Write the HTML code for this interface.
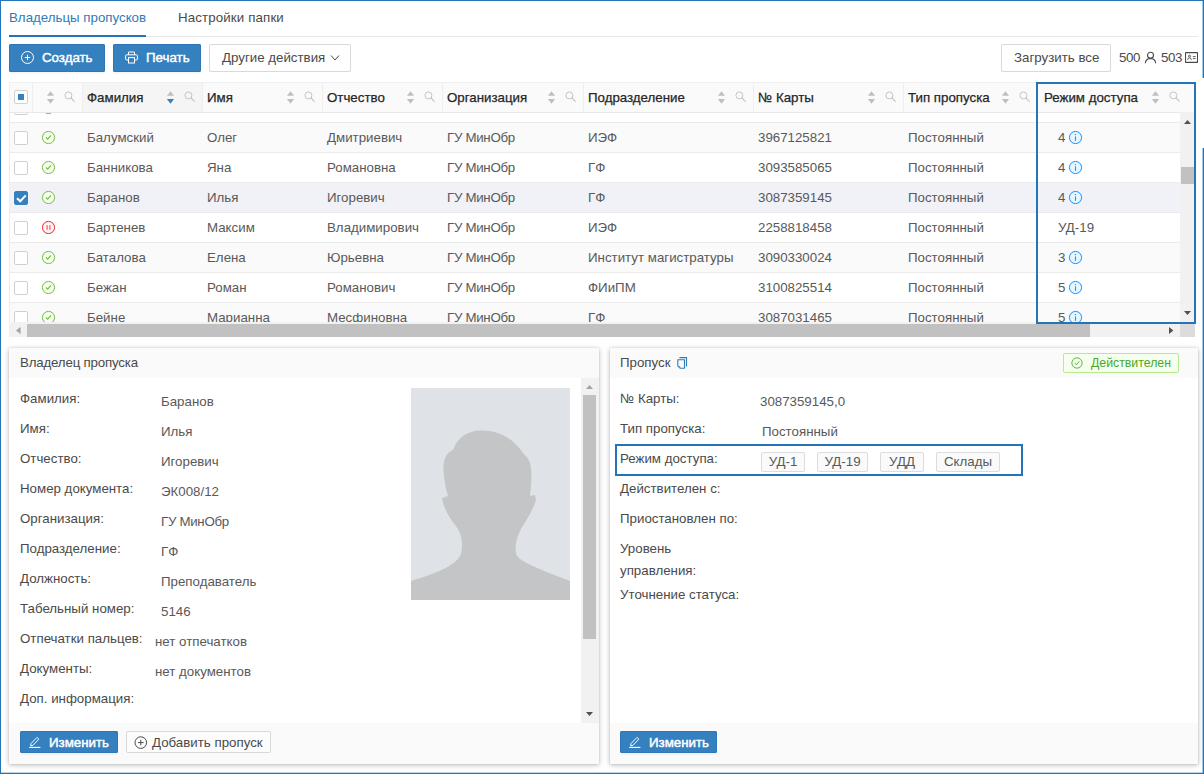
<!DOCTYPE html>
<html lang="ru">
<head>
<meta charset="utf-8">
<title>Владельцы пропусков</title>
<style>
*{box-sizing:border-box;margin:0;padding:0}
html,body{width:1204px;height:774px;overflow:hidden;background:#fff}
body{font-family:"Liberation Sans",sans-serif;font-size:13.3px;color:#595959;position:relative}
.abs{position:absolute}
.frame-t{left:0;top:0;width:1204px;height:1px;background:#2474ba}
.frame-b{left:0;top:772px;width:1204px;height:2px;background:linear-gradient(180deg,rgba(36,116,186,.3) 50%,#2474ba 50%)}
.frame-l{left:0;top:0;width:1px;height:774px;background:#2474ba}
.frame-r1{left:1202px;top:0;width:2px;height:78px;background:linear-gradient(90deg,rgba(36,116,186,.4) 50%,#2474ba 50%)}
.frame-r2{left:1202px;top:148px;width:2px;height:626px;background:linear-gradient(90deg,rgba(36,116,186,.4) 50%,#2474ba 50%)}
.tabs{left:9px;top:0;width:1189px;height:37px;border-bottom:1px solid #e8e8e8}
.tab{position:absolute;top:0;height:37px;line-height:35px;white-space:nowrap;font-size:13.3px}
.tab.act{color:#337ab7;border-bottom:2px solid #2474ba;left:0;width:137px}
.tab.two{left:169px;color:#4a4a4a}
.btn{position:absolute;height:28px;line-height:28px;border-radius:2px;white-space:nowrap;font-size:13.3px}
.btn.pri{background:#3580be;color:#fff;border-radius:2px;box-shadow:inset 0 0 0 1px #2e76b6, 0 2px 0 rgba(0,0,0,0.035)}
.btn.def{background:#fff;border:1px solid #d9d9d9;color:#4a4a4a;line-height:26px}
svg{display:block}

.med{font-weight:normal;-webkit-text-stroke:0.45px currentColor}
.tbl{left:9px;top:82px;width:1186px;height:255px;overflow:hidden}
.thead{left:0;top:0;width:1186px;height:31px;background:#fafafa;border-bottom:1px solid #e8e8e8;border-top:1px solid #f0f0f0}
.th{position:absolute;top:0;height:29px;border-left:1px solid #efefef;line-height:30px;color:#262626}
.th.sorted{background:#f5f5f5}
.th .tt{position:absolute;left:4px;top:0;white-space:nowrap;font-weight:normal;-webkit-text-stroke:0.25px currentColor}
.th .sort{position:absolute;top:8px}
.th .srch{position:absolute;top:8px}
.tbody{left:0;top:31px;width:1171px;height:209px;overflow:hidden;background:#fff;border-left:1px solid #ececec}
.tr{position:absolute;left:-1px;width:1171px;height:30px;border-top:1px solid #ebebeb;line-height:29px;background:#fff}
.tr.odd{background:#fafafa}
.tr.sel{background:#f0f2f7}
.td{position:absolute;top:0;white-space:nowrap}
.cb{position:absolute;left:5px;top:8px;width:14px;height:14px;border:1px solid #d0d0d0;border-radius:2px;background:#fff}
.cb.on{background:#3580be;border-color:#3580be}
.cb.on svg{margin:-1px}
.cb.ind{top:7px;left:4px}
.cb.ind i{position:absolute;left:3px;top:3px;width:6px;height:6px;background:#3580be}
.st{position:absolute;left:32px;top:7px}
.inf{position:absolute;left:1059px;top:7px}
.vsb{left:1171px;top:30px;width:15px;height:210px;background:#f1f1f1}
.hsb{left:0;top:240px;width:1186px;height:15px;background:#f1f1f1}
.thumb{background:#c1c1c1}
.hl{border:2px solid #2474ba}

.panel{background:#fff;box-shadow:0 1px 5px rgba(0,0,0,0.28), 0 0 1px rgba(0,0,0,0.15)}
.phead{left:0;top:0;width:100%;height:30px;background:#fafafa;line-height:30px;color:#4a4a4a}
.pbody{left:0;top:30px;width:100%;height:345px;background:#fff;overflow:hidden}
.pfoot{left:0;top:375px;width:100%;height:41px;background:#fafafa}
.lab,.val{position:absolute;white-space:nowrap;line-height:30px;color:#4a4a4a}
.val{color:#595959}
.sbtn{position:absolute;top:8px;height:22px;line-height:23px;border-radius:2px;white-space:nowrap}
.sbtn.pri{background:#3580be;color:#fff;box-shadow:inset 0 0 0 1px #2e76b6, 0 2px 0 rgba(0,0,0,0.035)}
.sbtn.def{background:#fcfcfc;border:1px solid #d9d9d9;color:#4a4a4a;line-height:21px}
.gtag{border:1px solid #b7eb8f;background:#f6ffed;border-radius:2px;color:#4aa82a;line-height:18px;font-size:12.3px}
.tag{position:absolute;height:20px;line-height:18px;border:1px solid #dcdcdc;background:#fafafa;border-radius:2px;text-align:center;color:#595959}
</style>
</head>
<body>
<div class="abs tabs">
  <div class="tab act">Владельцы пропусков</div>
  <div class="tab two" style="letter-spacing:0.13px">Настройки папки</div>
</div>

<!-- toolbar -->
<div class="btn pri" style="left:9px;top:44px;width:96px"><svg class="abs" style="left:11px;top:6px" width="15" height="15" viewBox="0 0 15 15"><circle cx="7.5" cy="7.5" r="6" fill="none" stroke="#fff" stroke-width="1"/><path d="M7.5 4.8 V10.2 M4.8 7.5 H10.2" stroke="#fff" stroke-width="1"/></svg><span class="abs med" style="left:33px;top:0">Создать</span></div>
<div class="btn pri" style="left:113px;top:44px;width:88px"><svg class="abs" style="left:12px;top:7px" width="13" height="13" viewBox="0 0 13 13"><path d="M3.5 3.8 V1 H9.5 V3.8" fill="none" stroke="#fff" stroke-width="1"/><path d="M3.3 9 H1.6 Q0.6 9 0.6 8 V4.8 Q0.6 3.8 1.6 3.8 H11.4 Q12.4 3.8 12.4 4.8 V8 Q12.4 9 11.4 9 H9.7" fill="none" stroke="#fff" stroke-width="1"/><rect x="3.5" y="6.6" width="6" height="5.4" fill="none" stroke="#fff" stroke-width="1"/></svg><span class="abs med" style="left:33px;top:0">Печать</span></div>
<div class="btn def" style="left:209px;top:44px;width:142px"><span class="abs" style="left:12px;top:0">Другие действия</span><svg class="abs" style="left:120px;top:9px" width="10" height="8" viewBox="0 0 10 8"><path d="M1 1.5 L5 6 L9 1.5" fill="none" stroke="#4a4a4a" stroke-width="1"/></svg></div>
<div class="btn def" style="left:1001px;top:44px;width:110px"><span class="abs" style="left:12px;top:0">Загрузить все</span></div>
<div class="abs" style="left:1119px;top:44px;line-height:28px;color:#4a4a4a;letter-spacing:-0.4px">500</div>
<svg class="abs" style="left:1144px;top:51px" width="13" height="13" viewBox="0 0 13 13"><circle cx="6.5" cy="4.3" r="3" fill="none" stroke="#4a4a4a" stroke-width="1.1"/><path d="M1.3 12.2 Q1.8 7.6 6.5 7.4 Q11.2 7.6 11.7 12.2" fill="none" stroke="#4a4a4a" stroke-width="1.1"/></svg>
<div class="abs" style="left:1161px;top:44px;line-height:28px;color:#4a4a4a;letter-spacing:-0.4px">503</div>
<svg class="abs" style="left:1185px;top:52px" width="13" height="11" viewBox="0 0 13 11"><rect x="0.5" y="0.6" width="12" height="9.8" rx="0.4" fill="none" stroke="#4a4a4a" stroke-width="1.1"/><path d="M2.6 7.9 Q2.8 5.8 4.5 5.8 Q6.2 5.8 6.4 7.9 M7.8 4.6 H10.6 M7.8 6.6 H10.6" fill="none" stroke="#4a4a4a" stroke-width="0.9"/><circle cx="4.5" cy="4.2" r="1" fill="none" stroke="#4a4a4a" stroke-width="0.9"/></svg>


<div class="abs tbl">
<div class="abs tbody">
<div class="tr" style="top:-21px">
<span class="cb"></span>
<svg class="st" width="15" height="15" viewBox="0 0 15 15"><circle cx="7.5" cy="7.5" r="6.1" fill="#f6ffed" stroke="#6fc03c" stroke-width="1"/><path d="M5 7.5 L6.7 9.2 L10 5.3" fill="none" stroke="#6fc03c" stroke-width="1.1"/></svg>
<span class="td" style="left:78px">Балашов</span>
<span class="td" style="left:198px">Анна</span>
<span class="td" style="left:318px">Алексеевна</span>
<span class="td" style="left:438px"></span>
<span class="td" style="left:579px">ИЭФ</span>
<span class="td" style="left:749px">3087031222</span>
<span class="td" style="left:899px">Постоянный</span>
</div>
<div class="tr odd" style="top:9px">
<span class="cb"></span>
<svg class="st" width="15" height="15" viewBox="0 0 15 15"><circle cx="7.5" cy="7.5" r="6.1" fill="#f6ffed" stroke="#6fc03c" stroke-width="1"/><path d="M5 7.5 L6.7 9.2 L10 5.3" fill="none" stroke="#6fc03c" stroke-width="1.1"/></svg>
<span class="td" style="left:78px">Балумский</span>
<span class="td" style="left:198px">Олег</span>
<span class="td" style="left:318px">Дмитриевич</span>
<span class="td" style="left:438px;letter-spacing:-0.3px">ГУ МинОбр</span>
<span class="td" style="left:579px">ИЭФ</span>
<span class="td" style="left:749px">3967125821</span>
<span class="td" style="left:899px">Постоянный</span>
<span class="td" style="left:1049px">4</span><svg class="inf" width="15" height="15" viewBox="0 0 15 15"><circle cx="7.5" cy="7.5" r="6.1" fill="#e6f7ff" stroke="#1890ff" stroke-width="1"/><path d="M7.5 6.4 V10.8" stroke="#1890ff" stroke-width="1.1"/><circle cx="7.5" cy="4.6" r="0.7" fill="#1890ff"/></svg>
</div>
<div class="tr" style="top:39px">
<span class="cb"></span>
<svg class="st" width="15" height="15" viewBox="0 0 15 15"><circle cx="7.5" cy="7.5" r="6.1" fill="#f6ffed" stroke="#6fc03c" stroke-width="1"/><path d="M5 7.5 L6.7 9.2 L10 5.3" fill="none" stroke="#6fc03c" stroke-width="1.1"/></svg>
<span class="td" style="left:78px">Банникова</span>
<span class="td" style="left:198px">Яна</span>
<span class="td" style="left:318px">Романовна</span>
<span class="td" style="left:438px;letter-spacing:-0.3px">ГУ МинОбр</span>
<span class="td" style="left:579px">ГФ</span>
<span class="td" style="left:749px">3093585065</span>
<span class="td" style="left:899px">Постоянный</span>
<span class="td" style="left:1049px">4</span><svg class="inf" width="15" height="15" viewBox="0 0 15 15"><circle cx="7.5" cy="7.5" r="6.1" fill="#e6f7ff" stroke="#1890ff" stroke-width="1"/><path d="M7.5 6.4 V10.8" stroke="#1890ff" stroke-width="1.1"/><circle cx="7.5" cy="4.6" r="0.7" fill="#1890ff"/></svg>
</div>
<div class="tr sel" style="top:69px">
<span class="cb on"><svg width="14" height="14" viewBox="0 0 14 14"><path d="M3 7.2 L6.3 10.3 L11.7 4.4" fill="none" stroke="#fff" stroke-width="2"/></svg></span>
<svg class="st" width="15" height="15" viewBox="0 0 15 15"><circle cx="7.5" cy="7.5" r="6.1" fill="#f6ffed" stroke="#6fc03c" stroke-width="1"/><path d="M5 7.5 L6.7 9.2 L10 5.3" fill="none" stroke="#6fc03c" stroke-width="1.1"/></svg>
<span class="td" style="left:78px">Баранов</span>
<span class="td" style="left:198px">Илья</span>
<span class="td" style="left:318px">Игоревич</span>
<span class="td" style="left:438px;letter-spacing:-0.3px">ГУ МинОбр</span>
<span class="td" style="left:579px">ГФ</span>
<span class="td" style="left:749px">3087359145</span>
<span class="td" style="left:899px">Постоянный</span>
<span class="td" style="left:1049px">4</span><svg class="inf" width="15" height="15" viewBox="0 0 15 15"><circle cx="7.5" cy="7.5" r="6.1" fill="#e6f7ff" stroke="#1890ff" stroke-width="1"/><path d="M7.5 6.4 V10.8" stroke="#1890ff" stroke-width="1.1"/><circle cx="7.5" cy="4.6" r="0.7" fill="#1890ff"/></svg>
</div>
<div class="tr" style="top:99px">
<span class="cb"></span>
<svg class="st" width="15" height="15" viewBox="0 0 15 15"><circle cx="7.5" cy="7.5" r="6.1" fill="#fff1f0" stroke="#f5222d" stroke-width="1"/><path d="M6.1 5.3 V9.7 M8.9 5.3 V9.7" fill="none" stroke="#f5222d" stroke-opacity="0.8" stroke-width="1.1"/></svg>
<span class="td" style="left:78px">Бартенев</span>
<span class="td" style="left:198px">Максим</span>
<span class="td" style="left:318px">Владимирович</span>
<span class="td" style="left:438px;letter-spacing:-0.3px">ГУ МинОбр</span>
<span class="td" style="left:579px">ИЭФ</span>
<span class="td" style="left:749px">2258818458</span>
<span class="td" style="left:899px">Постоянный</span>
<span class="td" style="left:1049px">УД-19</span>
</div>
<div class="tr odd" style="top:129px">
<span class="cb"></span>
<svg class="st" width="15" height="15" viewBox="0 0 15 15"><circle cx="7.5" cy="7.5" r="6.1" fill="#f6ffed" stroke="#6fc03c" stroke-width="1"/><path d="M5 7.5 L6.7 9.2 L10 5.3" fill="none" stroke="#6fc03c" stroke-width="1.1"/></svg>
<span class="td" style="left:78px">Баталова</span>
<span class="td" style="left:198px">Елена</span>
<span class="td" style="left:318px">Юрьевна</span>
<span class="td" style="left:438px;letter-spacing:-0.3px">ГУ МинОбр</span>
<span class="td" style="left:579px">Институт магистратуры</span>
<span class="td" style="left:749px">3090330024</span>
<span class="td" style="left:899px">Постоянный</span>
<span class="td" style="left:1049px">3</span><svg class="inf" width="15" height="15" viewBox="0 0 15 15"><circle cx="7.5" cy="7.5" r="6.1" fill="#e6f7ff" stroke="#1890ff" stroke-width="1"/><path d="M7.5 6.4 V10.8" stroke="#1890ff" stroke-width="1.1"/><circle cx="7.5" cy="4.6" r="0.7" fill="#1890ff"/></svg>
</div>
<div class="tr" style="top:159px">
<span class="cb"></span>
<svg class="st" width="15" height="15" viewBox="0 0 15 15"><circle cx="7.5" cy="7.5" r="6.1" fill="#f6ffed" stroke="#6fc03c" stroke-width="1"/><path d="M5 7.5 L6.7 9.2 L10 5.3" fill="none" stroke="#6fc03c" stroke-width="1.1"/></svg>
<span class="td" style="left:78px">Бежан</span>
<span class="td" style="left:198px">Роман</span>
<span class="td" style="left:318px">Романович</span>
<span class="td" style="left:438px;letter-spacing:-0.3px">ГУ МинОбр</span>
<span class="td" style="left:579px">ФИиПМ</span>
<span class="td" style="left:749px">3100825514</span>
<span class="td" style="left:899px">Постоянный</span>
<span class="td" style="left:1049px">5</span><svg class="inf" width="15" height="15" viewBox="0 0 15 15"><circle cx="7.5" cy="7.5" r="6.1" fill="#e6f7ff" stroke="#1890ff" stroke-width="1"/><path d="M7.5 6.4 V10.8" stroke="#1890ff" stroke-width="1.1"/><circle cx="7.5" cy="4.6" r="0.7" fill="#1890ff"/></svg>
</div>
<div class="tr odd" style="top:189px">
<span class="cb"></span>
<svg class="st" width="15" height="15" viewBox="0 0 15 15"><circle cx="7.5" cy="7.5" r="6.1" fill="#f6ffed" stroke="#6fc03c" stroke-width="1"/><path d="M5 7.5 L6.7 9.2 L10 5.3" fill="none" stroke="#6fc03c" stroke-width="1.1"/></svg>
<span class="td" style="left:78px">Бейне</span>
<span class="td" style="left:198px">Марианна</span>
<span class="td" style="left:318px">Месфиновна</span>
<span class="td" style="left:438px;letter-spacing:-0.3px">ГУ МинОбр</span>
<span class="td" style="left:579px">ГФ</span>
<span class="td" style="left:749px">3087031465</span>
<span class="td" style="left:899px">Постоянный</span>
<span class="td" style="left:1049px">5</span><svg class="inf" width="15" height="15" viewBox="0 0 15 15"><circle cx="7.5" cy="7.5" r="6.1" fill="#e6f7ff" stroke="#1890ff" stroke-width="1"/><path d="M7.5 6.4 V10.8" stroke="#1890ff" stroke-width="1.1"/><circle cx="7.5" cy="4.6" r="0.7" fill="#1890ff"/></svg>
</div>
</div>
<div class="abs thead">
<div class="th" style="left:0px;width:23px">
<span class="cb ind"><i></i></span>
</div>
<div class="th" style="left:23px;width:50px">
<svg class="sort" style="left:13px" width="9" height="14" viewBox="0 0 9 14"><path d="M4.5 0.2 L8.1 4.8 L0.9 4.8 Z" fill="#bfbfbf"/><path d="M4.5 12.7 L8.1 8 L0.9 8 Z" fill="#bfbfbf"/></svg>
<svg class="srch" style="left:31px" width="11" height="11" viewBox="0 0 12 12"><circle cx="4.8" cy="4.8" r="3.8" fill="none" stroke="#bfbfbf" stroke-width="1"/><path d="M7.6 7.6 L11.5 11.5" stroke="#bfbfbf" stroke-width="1.1"/></svg>
</div>
<div class="th sorted" style="left:73px;width:120px">
<span class="tt">Фамилия</span>
<svg class="sort" style="left:83px" width="9" height="14" viewBox="0 0 9 14"><path d="M4.5 0.2 L8.1 4.8 L0.9 4.8 Z" fill="#bfbfbf"/><path d="M4.5 12.7 L8.1 8 L0.9 8 Z" fill="#3580be"/></svg>
<svg class="srch" style="left:101px" width="11" height="11" viewBox="0 0 12 12"><circle cx="4.8" cy="4.8" r="3.8" fill="none" stroke="#bfbfbf" stroke-width="1"/><path d="M7.6 7.6 L11.5 11.5" stroke="#bfbfbf" stroke-width="1.1"/></svg>
</div>
<div class="th" style="left:193px;width:120px">
<span class="tt">Имя</span>
<svg class="sort" style="left:83px" width="9" height="14" viewBox="0 0 9 14"><path d="M4.5 0.2 L8.1 4.8 L0.9 4.8 Z" fill="#bfbfbf"/><path d="M4.5 12.7 L8.1 8 L0.9 8 Z" fill="#bfbfbf"/></svg>
<svg class="srch" style="left:101px" width="11" height="11" viewBox="0 0 12 12"><circle cx="4.8" cy="4.8" r="3.8" fill="none" stroke="#bfbfbf" stroke-width="1"/><path d="M7.6 7.6 L11.5 11.5" stroke="#bfbfbf" stroke-width="1.1"/></svg>
</div>
<div class="th" style="left:313px;width:120px">
<span class="tt">Отчество</span>
<svg class="sort" style="left:83px" width="9" height="14" viewBox="0 0 9 14"><path d="M4.5 0.2 L8.1 4.8 L0.9 4.8 Z" fill="#bfbfbf"/><path d="M4.5 12.7 L8.1 8 L0.9 8 Z" fill="#bfbfbf"/></svg>
<svg class="srch" style="left:101px" width="11" height="11" viewBox="0 0 12 12"><circle cx="4.8" cy="4.8" r="3.8" fill="none" stroke="#bfbfbf" stroke-width="1"/><path d="M7.6 7.6 L11.5 11.5" stroke="#bfbfbf" stroke-width="1.1"/></svg>
</div>
<div class="th" style="left:433px;width:141px">
<span class="tt">Организация</span>
<svg class="sort" style="left:104px" width="9" height="14" viewBox="0 0 9 14"><path d="M4.5 0.2 L8.1 4.8 L0.9 4.8 Z" fill="#bfbfbf"/><path d="M4.5 12.7 L8.1 8 L0.9 8 Z" fill="#bfbfbf"/></svg>
<svg class="srch" style="left:122px" width="11" height="11" viewBox="0 0 12 12"><circle cx="4.8" cy="4.8" r="3.8" fill="none" stroke="#bfbfbf" stroke-width="1"/><path d="M7.6 7.6 L11.5 11.5" stroke="#bfbfbf" stroke-width="1.1"/></svg>
</div>
<div class="th" style="left:574px;width:170px">
<span class="tt">Подразделение</span>
<svg class="sort" style="left:133px" width="9" height="14" viewBox="0 0 9 14"><path d="M4.5 0.2 L8.1 4.8 L0.9 4.8 Z" fill="#bfbfbf"/><path d="M4.5 12.7 L8.1 8 L0.9 8 Z" fill="#bfbfbf"/></svg>
<svg class="srch" style="left:151px" width="11" height="11" viewBox="0 0 12 12"><circle cx="4.8" cy="4.8" r="3.8" fill="none" stroke="#bfbfbf" stroke-width="1"/><path d="M7.6 7.6 L11.5 11.5" stroke="#bfbfbf" stroke-width="1.1"/></svg>
</div>
<div class="th" style="left:744px;width:150px">
<span class="tt">№ Карты</span>
<svg class="sort" style="left:113px" width="9" height="14" viewBox="0 0 9 14"><path d="M4.5 0.2 L8.1 4.8 L0.9 4.8 Z" fill="#bfbfbf"/><path d="M4.5 12.7 L8.1 8 L0.9 8 Z" fill="#bfbfbf"/></svg>
<svg class="srch" style="left:131px" width="11" height="11" viewBox="0 0 12 12"><circle cx="4.8" cy="4.8" r="3.8" fill="none" stroke="#bfbfbf" stroke-width="1"/><path d="M7.6 7.6 L11.5 11.5" stroke="#bfbfbf" stroke-width="1.1"/></svg>
</div>
<div class="th" style="left:894px;width:134px">
<span class="tt">Тип пропуска</span>
<svg class="sort" style="left:97px" width="9" height="14" viewBox="0 0 9 14"><path d="M4.5 0.2 L8.1 4.8 L0.9 4.8 Z" fill="#bfbfbf"/><path d="M4.5 12.7 L8.1 8 L0.9 8 Z" fill="#bfbfbf"/></svg>
<svg class="srch" style="left:115px" width="11" height="11" viewBox="0 0 12 12"><circle cx="4.8" cy="4.8" r="3.8" fill="none" stroke="#bfbfbf" stroke-width="1"/><path d="M7.6 7.6 L11.5 11.5" stroke="#bfbfbf" stroke-width="1.1"/></svg>
</div>
<div class="th" style="left:1028px;width:158px">
<span class="tt" style=left:6px>Режим доступа</span>
<svg class="sort" style="left:113px" width="9" height="14" viewBox="0 0 9 14"><path d="M4.5 0.2 L8.1 4.8 L0.9 4.8 Z" fill="#bfbfbf"/><path d="M4.5 12.7 L8.1 8 L0.9 8 Z" fill="#bfbfbf"/></svg>
<svg class="srch" style="left:131px" width="11" height="11" viewBox="0 0 12 12"><circle cx="4.8" cy="4.8" r="3.8" fill="none" stroke="#bfbfbf" stroke-width="1"/><path d="M7.6 7.6 L11.5 11.5" stroke="#bfbfbf" stroke-width="1.1"/></svg>
</div>
</div>
<div class="abs vsb"><svg class="abs" style="left:4px;top:8px" width="7" height="4" viewBox="0 0 7 4"><path d="M0 4 L3.5 0 L7 4 Z" fill="#505050"/></svg><div class="abs thumb" style="left:1px;top:55px;width:13px;height:17px"></div><svg class="abs" style="left:4px;top:199px" width="7" height="4" viewBox="0 0 7 4"><path d="M0 0 L3.5 4 L7 0 Z" fill="#505050"/></svg></div>
<div class="abs hsb"><svg class="abs" style="left:7px;top:5px" width="5" height="7" viewBox="0 0 5 7"><path d="M4.6 0 L0 3.5 L4.6 7 Z" fill="#a3a3a3"/></svg><div class="abs thumb" style="left:18px;top:2px;width:1063px;height:13px"></div><svg class="abs" style="left:1160px;top:5px" width="5" height="7" viewBox="0 0 5 7"><path d="M0 0 L4.4 3.5 L0 7 Z" fill="#505050"/></svg><div class="abs" style="left:1171px;top:0;width:15px;height:15px;background:#dcdcdc"></div></div>
</div>
<div class="abs hl" style="left:1036px;top:82px;width:160px;height:242px"></div>
<div class="abs panel" style="left:9px;top:348px;width:590px;height:416px">
<div class="abs phead"><span class="abs" style="left:11px;top:0;letter-spacing:-0.18px">Владелец пропуска</span></div>
<div class="abs pbody">
<span class="lab" style="left:11px;top:6px">Фамилия:</span>
<span class="val" style="left:152px;top:9px">Баранов</span>
<span class="lab" style="left:11px;top:36px">Имя:</span>
<span class="val" style="left:152px;top:39px">Илья</span>
<span class="lab" style="left:11px;top:66px">Отчество:</span>
<span class="val" style="left:152px;top:69px">Игоревич</span>
<span class="lab" style="left:11px;top:96px">Номер документа:</span>
<span class="val" style="left:152px;top:99px">ЭК008/12</span>
<span class="lab" style="left:11px;top:126px">Организация:</span>
<span class="val" style="left:152px;top:129px;letter-spacing:-0.3px">ГУ МинОбр</span>
<span class="lab" style="left:11px;top:156px">Подразделение:</span>
<span class="val" style="left:152px;top:159px">ГФ</span>
<span class="lab" style="left:11px;top:186px">Должность:</span>
<span class="val" style="left:152px;top:189px">Преподаватель</span>
<span class="lab" style="left:11px;top:216px">Табельный номер:</span>
<span class="val" style="left:152px;top:219px">5146</span>
<span class="lab" style="left:11px;top:246px">Отпечатки пальцев:</span>
<span class="val" style="left:146px;top:249px">нет отпечатков</span>
<span class="lab" style="left:11px;top:276px">Документы:</span>
<span class="val" style="left:146px;top:279px">нет документов</span>
<span class="lab" style="left:11px;top:306px">Доп. информация:</span>
<svg class="abs" style="left:402px;top:10px" width="159" height="212" viewBox="0 0 159 212"><rect width="159" height="212" fill="#dfe2e6"/><path d="M72 42.5 C58 42 47 48 42 62 C35 65 32 72 32.5 82 C33 92 35 101 37 108 L31 110 C33 122 40 132 47 141 C51 148 52 158 50 166 C46 176 30 184 0 193 L0 212 L159 212 L159 193 C130 182 112 175 106 168 C103 160 105 150 110 141 C116 131 122 122 125 112 L124 107 L119 108 C120 99 121 90 120 80 C119 72 116 69 112 65 C103 52 90 43 72 42.5 Z" fill="#c4c5c7"/></svg>
<div class="abs" style="left:572px;top:0;width:18px;height:345px;background:#f1f1f1"><svg class="abs" style="left:5px;top:7px" width="7" height="4" viewBox="0 0 7 4"><path d="M0 4 L3.5 0 L7 4 Z" fill="#a3a3a3"/></svg><div class="abs thumb" style="left:2px;top:17px;width:13px;height:244px"></div><svg class="abs" style="left:5px;top:334px" width="7" height="4" viewBox="0 0 7 4"><path d="M0 0 L3.5 4 L7 0 Z" fill="#505050"/></svg></div>
</div>
<div class="abs pfoot">
<div class="sbtn pri" style="left:11px;width:98px"><svg class="abs" style="left:9px;top:4px" width="13" height="13" viewBox="0 0 13 13"><path d="M2 8.6 L8 2.4 L9.9 4.2 L3.9 10.4 L1.7 10.8 Z" fill="none" stroke="#fff" stroke-width="1" stroke-linejoin="round"/><path d="M0.2 12.4 H11.4" stroke="#fff" stroke-width="1.1"/></svg><span class="abs med" style="left:29px;top:0">Изменить</span></div>
<div class="sbtn def" style="left:117px;width:145px"><svg class="abs" style="left:7px;top:3px" width="14" height="14" viewBox="0 0 14 14"><circle cx="6.8" cy="7.6" r="5.8" fill="none" stroke="#4a4a4a" stroke-width="1"/><path d="M6.8 4.8 V10.4 M4 7.6 H9.6" stroke="#4a4a4a" stroke-width="1"/></svg><span class="abs" style="left:25px;top:0">Добавить пропуск</span></div>
</div>
</div>
<div class="abs panel" style="left:610px;top:348px;width:588px;height:416px">
<div class="abs phead"><span class="abs" style="left:10px;top:0">Пропуск</span><svg class="abs" style="left:66px;top:8px" width="12" height="14" viewBox="0 0 12 14"><path d="M1.8 3.7 H8.5 V12.3 H4.3 L1.8 9.9 Z" fill="none" stroke="#2f7cbd" stroke-width="1.1" stroke-linejoin="round"/><path d="M1.9 10 H4.2 V12.2 Z" fill="#5b97cb"/><path d="M3.4 1.6 H10.5 V10.6" fill="none" stroke="#2f7cbd" stroke-width="1.1"/></svg><div class="abs gtag" style="left:453px;top:5px;width:116px;height:20px"><svg class="abs" style="left:7px;top:3px" width="12" height="12" viewBox="0 0 14 14"><circle cx="7" cy="7" r="6" fill="none" stroke="#4aa82a" stroke-width="1"/><path d="M4.3 7 L6.3 9.1 L9.8 4.9" fill="none" stroke="#4aa82a" stroke-width="1"/></svg><span class="abs" style="left:27px;top:0">Действителен</span></div></div>
<div class="abs pbody">
<span class="lab" style="left:10px;top:6px">№ Карты:</span>
<span class="lab" style="left:10px;top:36px">Тип пропуска:</span>
<span class="lab" style="left:10px;top:66px">Режим доступа:</span>
<span class="lab" style="left:10px;top:96px">Действителен с:</span>
<span class="lab" style="left:10px;top:126px">Приостановлен по:</span>
<span class="lab" style="left:10px;top:156px">Уровень</span>
<span class="lab" style="left:10px;top:178px">управления:</span>
<span class="lab" style="left:10px;top:202px">Уточнение статуса:</span>
<span class="val" style="left:150px;top:9px">3087359145,0</span>
<span class="val" style="left:152px;top:39px">Постоянный</span>
<span class="tag" style="left:151px;top:74px;width:44px">УД-1</span>
<span class="tag" style="left:207px;top:74px;width:51px">УД-19</span>
<span class="tag" style="left:270px;top:74px;width:44px">УДД</span>
<span class="tag" style="left:326px;top:74px;width:64px">Склады</span>
<div class="abs hl" style="left:5px;top:66px;width:408px;height:32px"></div>
</div>
<div class="abs pfoot">
<div class="sbtn pri" style="left:10px;width:97px"><svg class="abs" style="left:9px;top:4px" width="13" height="13" viewBox="0 0 13 13"><path d="M2 8.6 L8 2.4 L9.9 4.2 L3.9 10.4 L1.7 10.8 Z" fill="none" stroke="#fff" stroke-width="1" stroke-linejoin="round"/><path d="M0.2 12.4 H11.4" stroke="#fff" stroke-width="1.1"/></svg><span class="abs med" style="left:29px;top:0">Изменить</span></div>
</div>
</div>

<div class="abs frame-t"></div><div class="abs frame-b"></div><div class="abs frame-l"></div><div class="abs frame-r1"></div><div class="abs frame-r2"></div>
</body>
</html>
